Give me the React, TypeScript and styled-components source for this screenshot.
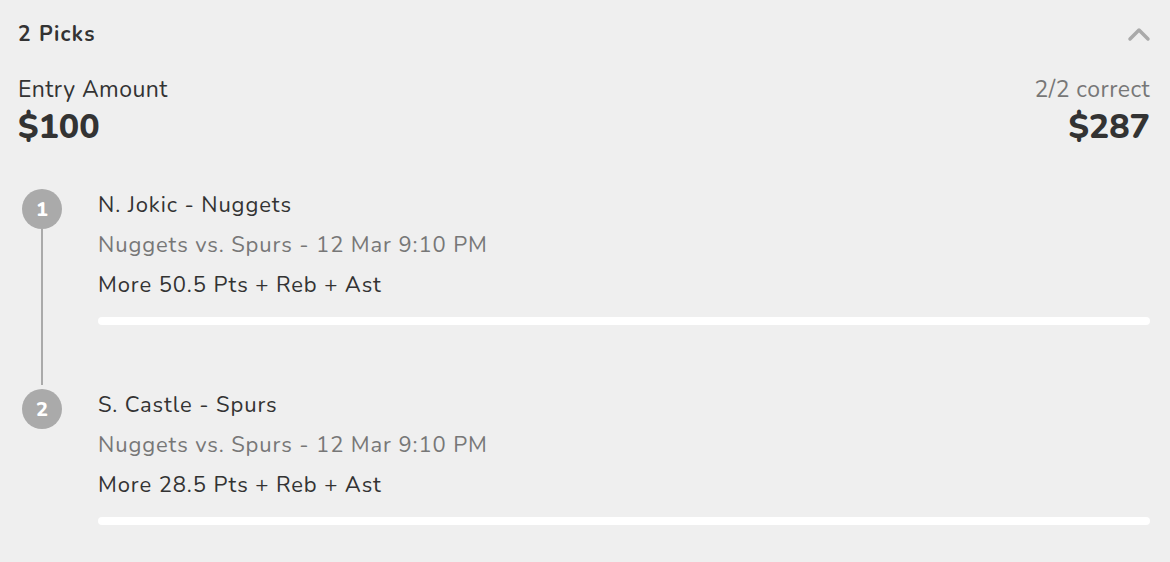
import React from 'react';
import styled, { createGlobalStyle } from 'styled-components';

const GlobalStyle = createGlobalStyle`
  html, body {
    margin: 0;
    padding: 0;
    background: #efefef;
  }
  body {
    font-family: "Nunito", Lato, "Open Sans", sans-serif;
    color: #333;
  }
`;

interface Pick {
  player: string;
  game: string;
  line: string;
}

const picks: Pick[] = [
  { player: 'N. Jokic - Nuggets', game: 'Nuggets vs. Spurs - 12 Mar 9:10 PM', line: 'More 50.5 Pts + Reb + Ast' },
  { player: 'S. Castle - Spurs', game: 'Nuggets vs. Spurs - 12 Mar 9:10 PM', line: 'More 28.5 Pts + Reb + Ast' },
];

const App: React.FC = () => {
  return (
    <>
      <GlobalStyle />
      <Card>
        <Header>
          <Title>2 Picks</Title>
          <Chevron width="24" height="16" viewBox="0 0 24 16">
            <polyline points="3,13 12,4 21,13" />
          </Chevron>
        </Header>
        <Summary>
          <Side>
            <Label>Entry Amount</Label>
            <Amount>$100</Amount>
          </Side>
          <Side $right>
            <Label $muted>2/2 correct</Label>
            <Amount>$287</Amount>
          </Side>
        </Summary>
        <List>
          {picks.map((p, i) => (
            <Item key={i}>
              <Marker>
                <Num>{i + 1}</Num>
                {i < picks.length - 1 && <Connector />}
              </Marker>
              <Body>
                <Text>{p.player}</Text>
                <Text $muted>{p.game}</Text>
                <Text>{p.line}</Text>
                <Bar />
              </Body>
            </Item>
          ))}
        </List>
      </Card>
    </>
  );
};

const Card = styled.div`
  padding: 19px 20px 0 18px;
`;

const Header = styled.div`
  display: flex;
  justify-content: space-between;
  align-items: center;
  height: 30px;
`;

const Title = styled.div`
  font-size: 21px;
  font-weight: 700;
  letter-spacing: 1.3px;
  color: #333;
`;

const Chevron = styled.svg`
  margin-right: -1px;
  fill: none;
  stroke: #aaa;
  stroke-width: 3.5;
  stroke-linecap: round;
  stroke-linejoin: round;
`;

const Summary = styled.div`
  display: flex;
  justify-content: space-between;
  margin-top: 26px;
`;

const Side = styled.div<{ $right?: boolean }>`
  display: flex;
  flex-direction: column;
  align-items: ${(p) => (p.$right ? 'flex-end' : 'flex-start')};
`;

const Label = styled.div<{ $muted?: boolean }>`
  font-size: 23px;
  line-height: 30px;
  letter-spacing: 0.45px;
  color: ${(p) => (p.$muted ? '#777' : '#333')};
`;

const Amount = styled.div`
  font-size: 34px;
  line-height: 40px;
  font-weight: 800;
  color: #333;
  margin-top: 2px;
`;

const List = styled.div`
  margin-top: 38px;
  display: flex;
  flex-direction: column;
`;

const Item = styled.div`
  display: flex;
`;

const Marker = styled.div`
  width: 80px;
  padding: 4px 0 0 4px;
  box-sizing: border-box;
  display: flex;
  flex-direction: column;
  align-items: flex-start;
`;

const Num = styled.div`
  width: 40px;
  height: 40px;
  border-radius: 50%;
  background: #aaa;
  color: #fff;
  font-size: 20px;
  font-weight: 800;
  display: flex;
  align-items: center;
  justify-content: center;
`;

const Connector = styled.div`
  flex: 1;
  width: 2px;
  margin-left: 19px;
  background: #aaa;
`;

const Body = styled.div`
  flex: 1;
  padding-bottom: 60px;
`;

const Text = styled.div<{ $muted?: boolean }>`
  font-size: 22px;
  line-height: 40px;
  letter-spacing: 0.9px;
  color: ${(p) => (p.$muted ? '#777' : '#333')};
`;

const Bar = styled.div`
  margin-top: 12px;
  height: 8px;
  border-radius: 4px;
  background: #fff;
`;

export default App;
